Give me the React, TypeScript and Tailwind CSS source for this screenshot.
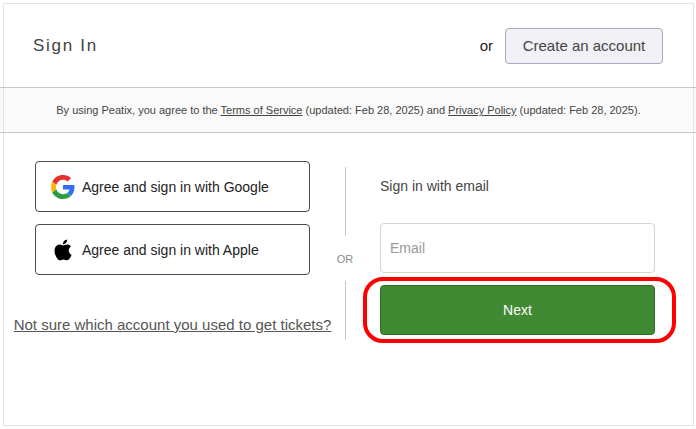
import type { ReactNode } from "react";

function GoogleIcon() {
  return (
    <svg viewBox="0 0 48 48" className="size-6 shrink-0" aria-hidden="true">
      <path
        fill="#e52f2c"
        d="M24 9.5c3.54 0 6.71 1.22 9.21 3.6l6.85-6.85C35.9 2.38 30.47 0 24 0 14.62 0 6.51 5.38 2.56 13.22l7.98 6.19C12.43 13.72 17.74 9.5 24 9.5z"
      />
      <path
        fill="#346ff1"
        d="M46.98 24.55c0-1.57-.15-3.09-.38-4.55H24v9.02h12.94c-.58 2.96-2.26 5.48-4.78 7.18l7.73 6c4.51-4.18 7.09-10.36 7.09-17.65z"
      />
      <path
        fill="#fbb50b"
        d="M10.53 28.59c-.48-1.45-.76-2.99-.76-4.59s.27-3.14.76-4.59l-7.98-6.19C.92 16.46 0 20.12 0 24c0 3.88.92 7.54 2.56 10.78l7.97-6.19z"
      />
      <path
        fill="#2e9c42"
        d="M24 48c6.48 0 11.93-2.13 15.89-5.81l-7.73-6c-2.15 1.45-4.92 2.3-8.16 2.3-6.26 0-11.57-4.22-13.47-9.91l-7.98 6.19C6.51 42.62 14.62 48 24 48z"
      />
    </svg>
  );
}

function AppleIcon() {
  return (
    <svg viewBox="0 0 24 24" className="size-6 shrink-0" aria-hidden="true">
      <path
        transform="translate(1.6 1.4) scale(.87)"
        d="M12.152 6.896c-.948 0-2.415-1.078-3.96-1.04-2.04.027-3.91 1.183-4.961 3.014-2.117 3.675-.546 9.103 1.519 12.09 1.013 1.454 2.208 3.09 3.792 3.039 1.52-.065 2.09-.987 3.935-.987 1.831 0 2.35.987 3.96.948 1.637-.026 2.676-1.48 3.676-2.948 1.156-1.688 1.636-3.325 1.662-3.415-.039-.013-3.182-1.221-3.22-4.857-.026-3.04 2.48-4.494 2.597-4.559-1.429-2.09-3.623-2.324-4.39-2.376-2-.156-3.675 1.09-4.61 1.09zM15.53 3.83c.843-1.012 1.4-2.427 1.245-3.83-1.207.052-2.662.805-3.532 1.818-.78.896-1.454 2.338-1.273 3.714 1.338.104 2.715-.688 3.559-1.701"
      />
    </svg>
  );
}

function ProviderButton({ icon, children }: { icon: ReactNode; children: ReactNode }) {
  return (
    <button
      type="button"
      className="flex h-[51px] w-full items-center gap-[7px] rounded border border-[#4a4a4a] bg-white px-[15px] text-[#222]"
    >
      {icon}
      {children}
    </button>
  );
}

function OrDivider() {
  return (
    <div className="flex flex-col items-center pt-1.5">
      <div className="h-[69px] w-px bg-[#c8c8c8]" />
      <span className="pt-4 pb-3.5 text-[11px] leading-[15px] text-[#8a8a8a]">OR</span>
      <div className="h-[59px] w-px bg-[#c8c8c8]" />
    </div>
  );
}

export default function App() {
  return (
    <div className="flex min-h-screen flex-col overflow-x-hidden bg-white py-[3px] pr-[2px] pl-[3px] font-['Liberation_Sans',Arial,sans-serif] text-[14px] leading-5 text-[#444]">
      <main className="flex-1 border border-[#e4e4e4]">
        <header className="flex h-[83px] items-center justify-between pr-[30px] pl-[29px]">
          <h1 className="text-[17px] tracking-widest">Sign In</h1>
          <div className="flex items-center gap-3 text-[15px]">
            <span className="text-[#222]">or</span>
            <button
              type="button"
              className="h-9 w-[158px] rounded border border-[#abaac0] bg-[#f1f0f4] text-[#444]"
            >
              Create an account
            </button>
          </div>
        </header>

        <div className="-mx-1 border-y border-[#c8c8c8] bg-[#fafafa] px-[3px]">
          <p className="border-x border-[#e4e4e4] py-3 text-center text-[11px] leading-5">
            By using Peatix, you agree to the{" "}
            <a href="#terms" className="underline">
              Terms of Service
            </a>{" "}
            (updated: Feb 28, 2025) and{" "}
            <a href="#privacy" className="underline">
              Privacy Policy
            </a>{" "}
            (updated: Feb 28, 2025).
          </p>
        </div>

        <div className="grid grid-cols-[1fr_70px_1fr] pt-7 pr-[38px] pb-10 pl-[31px]">
          <div className="flex min-w-0 flex-col items-center gap-3">
            <ProviderButton icon={<GoogleIcon />}>Agree and sign in with Google</ProviderButton>
            <ProviderButton icon={<AppleIcon />}>Agree and sign in with Apple</ProviderButton>
            <a
              href="#find-account"
              className="mt-7 text-[15px] whitespace-nowrap text-[#555] underline"
            >
              Not sure which account you used to get tickets?
            </a>
          </div>

          <OrDivider />

          <form className="flex min-w-0 flex-col gap-3">
            <label htmlFor="email" className="flex h-[50px] items-center">
              Sign in with email
            </label>
            <input
              id="email"
              type="email"
              placeholder="Email"
              className="h-[50px] w-full rounded border border-[#d4d4d4] px-[9px] placeholder:text-[#999]"
            />
            <div className="relative">
              <button
                type="button"
                className="h-[50px] w-full rounded border border-[#2f6b26] bg-[#408a33] text-white"
              >
                Next
              </button>
              <div className="pointer-events-none absolute -top-2 -right-[21px] -bottom-2 -left-[17px] rounded-[20px] border-4 border-[#ff0000]" />
            </div>
          </form>
        </div>
      </main>
    </div>
  );
}
